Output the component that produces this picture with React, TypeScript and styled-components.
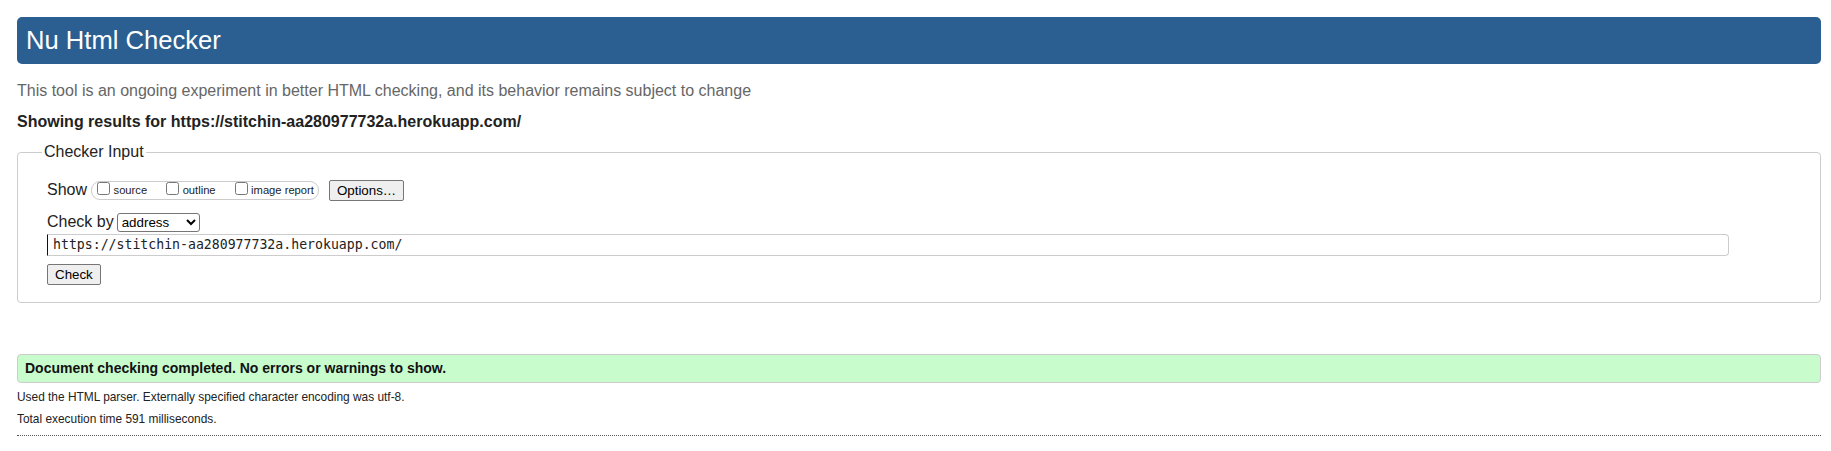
import styled, { createGlobalStyle } from "styled-components";

const GlobalStyle = createGlobalStyle`
    html, body {
        margin: 0;
        padding: 0;
        background: #fff;
    }

    body {
        font-family: "Liberation Sans", Arial, sans-serif;
        color: #222;
    }
`;

const Page = styled.div`
    padding: 17px 10px 20px 17px;
`;

const Title = styled.h1`
    margin: 0;
    padding: 8.6px 9px;
    font-size: 25.6px;
    font-weight: 400;
    line-height: 29.4px;
    color: #fff;
    background-color: #2b5f91;
    border-radius: 5px;
`;

const Intro = styled.p`
    margin: 18px 0 0;
    font-size: 16px;
    line-height: 18.4px;
    color: #666;
`;

const ResultsFor = styled.p`
    margin: 13px 0 0;
    font-size: 16px;
    font-weight: 700;
    line-height: 18.4px;
`;

const InputBox = styled.fieldset`
    margin: 12px 0 0;
    padding: 18px 29px 17px;
    border: 1px solid #ccc;
    border-radius: 4px;
    min-inline-size: 0;

    legend {
        margin-left: -5px;
        padding: 0 2px;
        font-size: 16px;
        line-height: 18.4px;
    }
`;

const Row = styled.div<{ $gap?: number }>`
    display: flex;
    align-items: center;
    margin-top: ${({ $gap }) => $gap ?? 0}px;
    font-size: 16px;
    line-height: 18.4px;
`;

const Pill = styled.span`
    display: inline-flex;
    align-items: center;
    gap: 19px;
    height: 17px;
    margin-left: 4px;
    padding: 0 4px 0 5px;
    border: 1px solid #ccc;
    border-radius: 9px;
`;

const Toggle = styled.label`
    display: inline-flex;
    align-items: center;
    gap: 3.5px;
    font-size: 11.2px;
    line-height: 13px;

    input {
        width: 13px;
        height: 13px;
        margin: 0 0 4px;
    }
`;

const Button = styled.button<{ $left?: number }>`
    height: 21px;
    margin: 0 0 0 ${({ $left }) => $left ?? 0}px;
    padding: 1px 7px;
    font-family: "Liberation Sans", Arial, sans-serif;
    font-size: 13.33px;
    color: #000;
    background: #efefef;
    border: 1px solid #767676;
    border-radius: 2px;
`;

const Select = styled.select`
    width: 83px;
    height: 19px;
    margin-left: 3px;
    font-family: "Liberation Sans", Arial, sans-serif;
    font-size: 13.33px;
    color: #000;
    background: #fff;
    border: 1px solid #767676;
    border-radius: 3px;
`;

const UrlInput = styled.input`
    box-sizing: border-box;
    display: block;
    width: calc(100% - 62px);
    height: 22px;
    margin-top: 2px;
    padding: 0 5px;
    font-family: "DejaVu Sans Mono", "Liberation Mono", monospace;
    font-size: 13.2px;
    color: #222;
    border: 1px solid #ccc;
    border-left-color: #111;
    border-radius: 0 4px 4px 0;
    outline: none;
`;

const Success = styled.p`
    margin: 51px 0 0;
    padding: 5.5px 7px;
    font-size: 14px;
    font-weight: 700;
    line-height: 16.1px;
    color: #111;
    background-color: #c8fccc;
    border: 1px solid #ccc;
    border-radius: 4px;
`;

const Detail = styled.p`
    margin: 8px 0 0;
    font-size: 11.9px;
    line-height: 13.7px;
    color: #222;

    & + & {
        margin-top: 8.5px;
    }
`;

const Rule = styled.hr`
    margin: 8px 0 0;
    border: 0;
    border-top: 1px dotted #555;
`;

const url = "https://stitchin-aa280977732a.herokuapp.com/";

export default function App() {
    return (
        <>
            <GlobalStyle />
            <Page>
                <Title>Nu Html Checker</Title>
                <Intro>
                    This tool is an ongoing experiment in better HTML checking, and its behavior remains subject to change
                </Intro>
                <ResultsFor>Showing results for {url}</ResultsFor>

                <InputBox>
                    <legend>Checker Input</legend>
                    <Row>
                        Show
                        <Pill>
                            <Toggle><input type="checkbox" />source</Toggle>
                            <Toggle><input type="checkbox" />outline</Toggle>
                            <Toggle><input type="checkbox" />image report</Toggle>
                        </Pill>
                        <Button type="button" $left={10}>Options…</Button>
                    </Row>
                    <Row $gap={12}>
                        Check by
                        <Select defaultValue="address">
                            <option value="address">address</option>
                            <option value="file">file upload</option>
                            <option value="text">text input</option>
                        </Select>
                    </Row>
                    <UrlInput type="url" defaultValue={url} />
                    <Row $gap={8}>
                        <Button type="submit">Check</Button>
                    </Row>
                </InputBox>

                <Success>Document checking completed. No errors or warnings to show.</Success>
                <Detail>Used the HTML parser. Externally specified character encoding was utf-8.</Detail>
                <Detail>Total execution time 591 milliseconds.</Detail>
                <Rule />
            </Page>
        </>
    );
}
